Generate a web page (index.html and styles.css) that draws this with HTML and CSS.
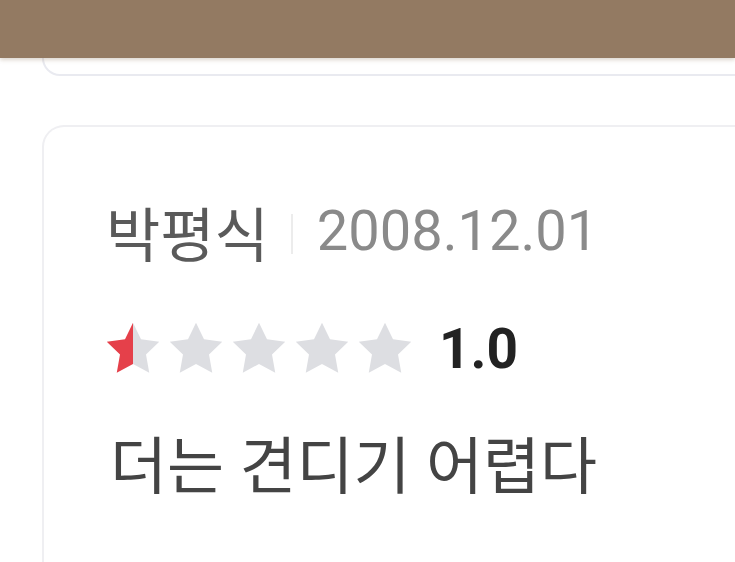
FILE: index.html
```html
<!DOCTYPE html>
<html lang="ko">
  <head>
    <meta charset="UTF-8" />
    <meta name="viewport" content="width=device-width, initial-scale=1.0" />
    <title>Reviews</title>
    <link rel="stylesheet" href="styles.css">
  </head>
  <body>
    <div class="topbar"></div>

    <div class="card card-prev"></div>

    <div class="card review">
      <div class="meta">
        <span class="name">박평식</span>
        <span class="divider"></span>
        <span class="date">2008.12.01</span>
      </div>

      <div class="rating">
        <div class="stars">
          <svg class="star" viewBox="0 0 24 24">
            <defs>
              <linearGradient id="half">
                <stop offset="50%" stop-color="#e5404a" />
                <stop offset="50%" stop-color="#dddee2" />
              </linearGradient>
            </defs>
            <polygon fill="url(#half)" points="12,1.5 15.2,8.1 22.5,9.1 17.2,14.2 18.5,21.5 12,18 5.5,21.5 6.8,14.2 1.5,9.1 8.8,8.1" />
          </svg>
          <svg class="star" viewBox="0 0 24 24">
            <polygon points="12,1.5 15.2,8.1 22.5,9.1 17.2,14.2 18.5,21.5 12,18 5.5,21.5 6.8,14.2 1.5,9.1 8.8,8.1" />
          </svg>
          <svg class="star" viewBox="0 0 24 24">
            <polygon points="12,1.5 15.2,8.1 22.5,9.1 17.2,14.2 18.5,21.5 12,18 5.5,21.5 6.8,14.2 1.5,9.1 8.8,8.1" />
          </svg>
          <svg class="star" viewBox="0 0 24 24">
            <polygon points="12,1.5 15.2,8.1 22.5,9.1 17.2,14.2 18.5,21.5 12,18 5.5,21.5 6.8,14.2 1.5,9.1 8.8,8.1" />
          </svg>
          <svg class="star" viewBox="0 0 24 24">
            <polygon points="12,1.5 15.2,8.1 22.5,9.1 17.2,14.2 18.5,21.5 12,18 5.5,21.5 6.8,14.2 1.5,9.1 8.8,8.1" />
          </svg>
        </div>
        <span class="score">1.0</span>
      </div>

      <p class="comment">더는 견디기 어렵다</p>
    </div>
  </body>
</html>
```

FILE: styles.css
```css
body {
  font-family: Roboto, "Noto Sans CJK KR", sans-serif;
  background-color: #fff;
  margin: 0;
  padding: 0;
  overflow: hidden;
  height: 562px;
}
.topbar {
  position: relative;
  z-index: 2;
  height: 58px;
  background-color: #937a62;
  box-shadow: 0 2px 4px rgba(120, 90, 60, 0.25);
}
.card {
  margin-left: 42px;
  margin-right: -40px;
  background-color: #fff;
  border: 2px solid #efeff2;
}
.card-prev {
  height: 16px;
  border-top: none;
  border-radius: 0 0 20px 20px;
  border-color: #e9eaf0;
  margin-bottom: 49px;
}
.review {
  border-radius: 22px 22px 0 0;
  border-bottom: none;
  padding: 70px 0 60px 62px;
  height: 400px;
}
.meta {
  display: flex;
  align-items: center;
  height: 68px;
}
.name {
  font-size: 59px;
  color: #5a5a5a;
}
.divider {
  width: 2px;
  height: 40px;
  margin: 6px 24px 0 22px;
  background-color: #ececec;
}
.date {
  font-size: 56px;
  color: #8a8a8a;
}
.rating {
  display: flex;
  align-items: center;
  margin-top: 54px;
}
.stars {
  display: flex;
  gap: 3px;
  margin-left: -3px;
}
.star {
  width: 60px;
  height: 60px;
  fill: #dddee2;
}
.score {
  margin-left: 24px;
  font-size: 55px;
  font-weight: bold;
  color: #222;
  line-height: 1;
}
.comment {
  margin: 52px 0 0 4px;
  font-size: 62px;
  color: #444;
  line-height: 1.2;
}
```
